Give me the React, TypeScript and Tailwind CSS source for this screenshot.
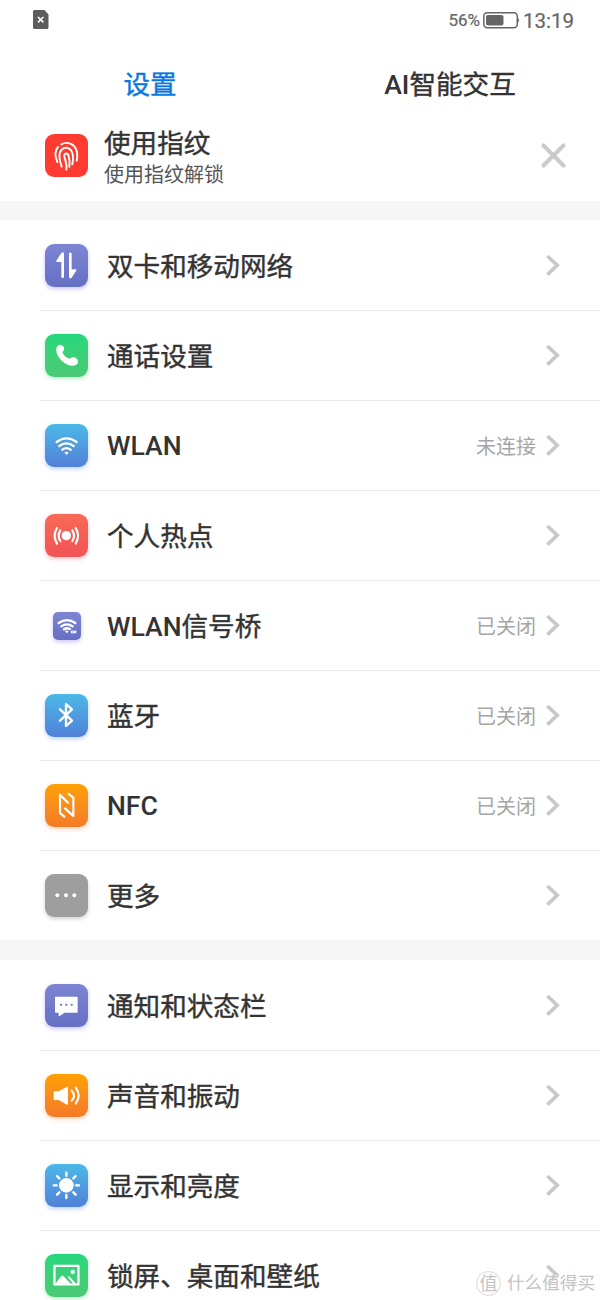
import type { ReactNode } from "react"
import { clsx } from "clsx"

type Tone = "purple" | "green" | "blue" | "red" | "orange" | "gray"

interface Item {
  label: string
  tone: Tone
  icon: ReactNode
  latin?: string
  value?: string
  small?: boolean
}

const tones: Record<Tone, string> = {
  purple: "bg-linear-to-b from-[#7d85d3] to-[#6670c4] shadow-[0_2px_4px_rgba(120,90,240,0.35)]",
  green: "bg-linear-to-b from-[#25d87c] to-[#4bc974] shadow-[0_2px_4px_rgba(60,220,120,0.35)]",
  blue: "bg-linear-to-b from-[#4bb8e8] to-[#5180d8] shadow-[0_2px_4px_rgba(70,130,255,0.35)]",
  red: "bg-linear-to-b from-[#f86a56] to-[#f15456] shadow-[0_2px_4px_rgba(255,80,80,0.35)]",
  orange: "bg-linear-to-b from-[#ffa000] to-[#f47a26] shadow-[0_2px_4px_rgba(255,120,40,0.35)]",
  gray: "bg-[#9e9e9e] shadow-[0_2px_4px_rgba(0,0,0,0.18)]",
}

const line = { fill: "none", stroke: "#fff", strokeLinecap: "round", strokeLinejoin: "round" } as const

const SimIcon = () => (
  <g fill="#fff">
    <path d="M49 27q7-5 8 1v72q-4 5-8 0V54H36q-4-1-1-5z" />
    <path d="M80 101q-7 5-8-1V28q4-5 8 0v48h12q4 1 1 5z" />
  </g>
)

const PhoneIcon = () => (
  <path
    fill="#fff"
    d="M36 38c3-6 10-8 15-4 6 4 9 11 4 17-2 3-3 5-1 8 4 7 9 11 16 14 4 2 6 0 9-2 6-4 12-1 17 4 5 5 4 13-2 17-7 4-17 4-26 0-15-7-26-18-32-32-3-8-3-16 0-22z"
  />
)

const WifiIcon = () => (
  <g>
    <g {...line} strokeWidth="7">
      <path d="M35 54Q64 32 95 54" />
      <path d="M43 66Q64 50 86 66" />
      <path d="M52 77Q64 68 77 77" />
    </g>
    <path fill="#fff" d="M58 85q6-4 13 0l-6 8z" />
  </g>
)

const HotspotIcon = () => (
  <g>
    <circle cx="64" cy="65" r="14" fill="#fff" />
    <g {...line} strokeWidth="6.5">
      <path d="M46 49Q36 65 46 81M82 49Q92 65 82 81" />
      <path d="M36 42Q22 65 36 89M92 42Q106 65 92 89" />
    </g>
  </g>
)

const BridgeIcon = () => (
  <g>
    <g {...line} strokeWidth="7">
      <path d="M17 33Q42 16 67 33" />
      <path d="M25 43Q42 31 59 43" />
      <path d="M33 52Q42 46 51 51" />
    </g>
    <path fill="#fff" d="M36 57q6-3 11 0l-5 7z" />
    <path {...line} strokeWidth="3" d="M60 57h-5v6h5zM65 62v-5h4v5h-6" />
  </g>
)

const BluetoothIcon = () => (
  <path {...line} strokeWidth="7" d="M45 46L81 80 63 96V30L81 46 45 80" />
)

const NfcIcon = () => (
  <path {...line} strokeWidth="6.5" d="M58 98L45 87V32L69 56M71 30L85 41V96L60 73" />
)

const MoreIcon = () => (
  <g fill="#fff">
    <circle cx="37" cy="63.5" r="6" />
    <circle cx="63" cy="63.5" r="6" />
    <circle cx="88" cy="63.5" r="6" />
  </g>
)

const MessageIcon = () => (
  <g>
    <path fill="#fff" d="M32 38H96q2 0 2 2V84q0 2-2 2H58L43 97q-2 1-2-1V86H32q-2 0-2-2V40q0-2 2-2z" />
    <g fill="#7078c9">
      <rect x="45" y="59" width="6" height="6" rx="1" />
      <rect x="61" y="59" width="6" height="6" rx="1" />
      <rect x="77" y="59" width="6" height="6" rx="1" />
    </g>
  </g>
)

const SoundIcon = () => (
  <g>
    <path fill="#fff" d="M28 52H41L66 38q3-1 3 2V90q0 3-3 2L41 78H28q-2 0-2-2V54q0-2 2-2z" />
    <g {...line} strokeWidth="6">
      <path d="M80 50Q94 65 80 80" />
      <path d="M92 41Q110 65 92 89" />
    </g>
  </g>
)

const SunIcon = () => (
  <g>
    <circle cx="64" cy="64" r="22" fill="#fff" />
    <path
      {...line}
      strokeWidth="7"
      d="M64 26v9M64 93v9M26 64h9M93 64h9M36 36l7 7M85 85l7 7M36 92l7-7M85 43l7-7"
    />
  </g>
)

const PictureIcon = () => (
  <g>
    <rect x="28.5" y="35.5" width="72" height="56" {...line} strokeWidth="6.5" />
    <path fill="#fff" d="M31 89L49 66q3-3 6 0L77 89zM68 69q2-4 6-1L94 90H85z" />
    <circle cx="83" cy="54" r="6.5" fill="#fff" />
  </g>
)

const FingerprintIcon = () => (
  <g {...line} strokeWidth="5.8">
    <path d="M37 84C29 66 28 51 39 39" />
    <path d="M49 31C65 22 84 28 92 43 98 55 98 67 95 80" />
    <path d="M50 98C43 78 39 58 49 48 58 38 72 40 79 50 86 62 85 76 82 91" />
    <path d="M64 107C67 91 60 77 58 68 56 56 68 55 71 66 75 78 74 88 73 98" />
  </g>
)

const networkItems: Item[] = [
  { label: "双卡和移动网络", tone: "purple", icon: <SimIcon /> },
  { label: "通话设置", tone: "green", icon: <PhoneIcon /> },
  { latin: "WLAN", label: "", tone: "blue", icon: <WifiIcon />, value: "未连接" },
  { label: "个人热点", tone: "red", icon: <HotspotIcon /> },
  { latin: "WLAN", label: "信号桥", tone: "purple", icon: <BridgeIcon />, value: "已关闭", small: true },
  { label: "蓝牙", tone: "blue", icon: <BluetoothIcon />, value: "已关闭" },
  { latin: "NFC", label: "", tone: "orange", icon: <NfcIcon />, value: "已关闭" },
  { label: "更多", tone: "gray", icon: <MoreIcon /> },
]

const deviceItems: Item[] = [
  { label: "通知和状态栏", tone: "purple", icon: <MessageIcon /> },
  { label: "声音和振动", tone: "orange", icon: <SoundIcon /> },
  { label: "显示和亮度", tone: "blue", icon: <SunIcon /> },
  { label: "锁屏、桌面和壁纸", tone: "green", icon: <PictureIcon /> },
]

function Chevron() {
  return (
    <svg className="mb-px" width="16" height="24" viewBox="0 0 16 24" fill="none" stroke="#c8c8c8" strokeWidth="3.6">
      <path d="M2.4 3L12.2 12.3 2.4 21.6" />
    </svg>
  )
}

// Latin letters take the real medium weight, Chinese gets a slightly thickened regular
function Latin({ children }: { children: ReactNode }) {
  return <span className="font-medium [-webkit-text-stroke:0px]">{children}</span>
}

function Row({ item }: { item: Item }) {
  return (
    <li className="ml-10 h-[90px] border-t border-[#e9e9e9] first:border-transparent pl-[5px] pr-[39px] flex items-center">
      <div className="w-[43px] flex justify-center shrink-0">
        <div
          className={clsx(
            item.small ? "size-7 rounded-[5px]" : "size-[43px] rounded-[9px]",
            tones[item.tone],
          )}
        >
          <svg className="size-full" viewBox={item.small ? "0 0 84 84" : "0 0 129 129"}>
            {item.icon}
          </svg>
        </div>
      </div>
      <span
        className={clsx(
          "ml-[19px] flex-1 text-[26.6px] leading-none text-[#333] [-webkit-text-stroke:0.4px_#333]",
          item.label ? "mt-[3px]" : "mt-px",
        )}
      >
        {item.latin && <Latin>{item.latin}</Latin>}
        {item.label}
      </span>
      {item.value && <span className="mt-0.5 mr-[9px] text-[20px] leading-none text-[#a6a6a6]">{item.value}</span>}
      <Chevron />
    </li>
  )
}

function StatusBar() {
  return (
    <div className="h-10 pl-[33px] pr-[26px] flex items-center justify-between text-[#666]">
      <svg width="16" height="20" viewBox="0 0 16 20">
        <path fill="#5c5c5c" d="M1.5 0H11.5L15.5 4.5V17.5a1.5 1.5 0 0 1-1.5 1.5H1.5A1.5 1.5 0 0 1 0 17.5V1.5A1.5 1.5 0 0 1 1.5 0z" />
        <path stroke="#fff" strokeWidth="1.6" d="M5 7l5.4 5.4M10.4 7L5 12.4" />
      </svg>
      <div className="flex items-center [-webkit-text-stroke:0.2px_#666]">
        <span className="mt-px text-[17px] leading-none">56%</span>
        <svg className="ml-[3px]" width="37" height="17" viewBox="0 0 37 17">
          <rect x="0.8" y="0.8" width="33.5" height="15" rx="3.5" fill="none" stroke="#666" strokeWidth="1.5" />
          <rect x="3" y="3" width="17.5" height="10.6" rx="2" fill="#666" />
          <path fill="#666" d="M34.5 5.5q3 2.8 0 5.6z" />
        </svg>
        <span className="ml-[3px] mt-0.5 text-[20.5px] leading-none">13:19</span>
      </div>
    </div>
  )
}

export default function App() {
  return (
    <div className="relative w-[600px] h-[1300px] overflow-hidden bg-white font-['Roboto','Noto_Sans_CJK_SC',sans-serif]">
      <StatusBar />

      {/* Tabs */}
      <div className="h-[88px] pt-0.5 grid grid-cols-2 items-center text-center text-[26.6px] leading-none">
        <span className="text-[#0b78e0] [-webkit-text-stroke:0.4px_#0b78e0]">设置</span>
        <span className="text-[#333] [-webkit-text-stroke:0.4px_#333]">
          <Latin>AI</Latin>智能交互
        </span>
      </div>

      {/* Fingerprint suggestion */}
      <div className="h-[73px] pl-[45px] pr-[33px] flex items-start">
        <div className="mt-1.5 size-[43px] rounded-[9px] bg-[#fe3b30]">
          <svg className="size-full" viewBox="0 0 129 129">
            <FingerprintIcon />
          </svg>
        </div>
        <div className="ml-4 pt-px flex-1 flex flex-col">
          <span className="text-[26.6px] leading-[30px] text-[#333] [-webkit-text-stroke:0.4px_#333]">使用指纹</span>
          <span className="mt-1 text-[20px] leading-6 text-[#555]">使用指纹解锁</span>
        </div>
        <svg className="mt-[14px]" width="27" height="27" viewBox="0 0 27 27" stroke="#cbcbcb" strokeWidth="4.2" strokeLinecap="round">
          <path d="M3.5 3.5L23.5 23.5M23.5 3.5L3.5 23.5" />
        </svg>
      </div>

      <div className="h-[19px] bg-[#f6f6f6]" />
      <ul>
        {networkItems.map((item) => (
          <Row key={item.tone + item.label} item={item} />
        ))}
      </ul>
      <div className="h-5 bg-[#f6f6f6]" />
      <ul>
        {deviceItems.map((item) => (
          <Row key={item.tone + item.label} item={item} />
        ))}
      </ul>

      {/* Watermark */}
      <div className="absolute left-[476px] top-[1271px] flex items-center text-[#c4c4c4]">
        <span className="size-[25px] rounded-full border border-[#d8d8d8] bg-white/70 flex items-center justify-center text-[18px] leading-none">
          值
        </span>
        <span className="ml-1.5 bg-white/50 text-[17.6px] leading-none">什么值得买</span>
      </div>
    </div>
  )
}
